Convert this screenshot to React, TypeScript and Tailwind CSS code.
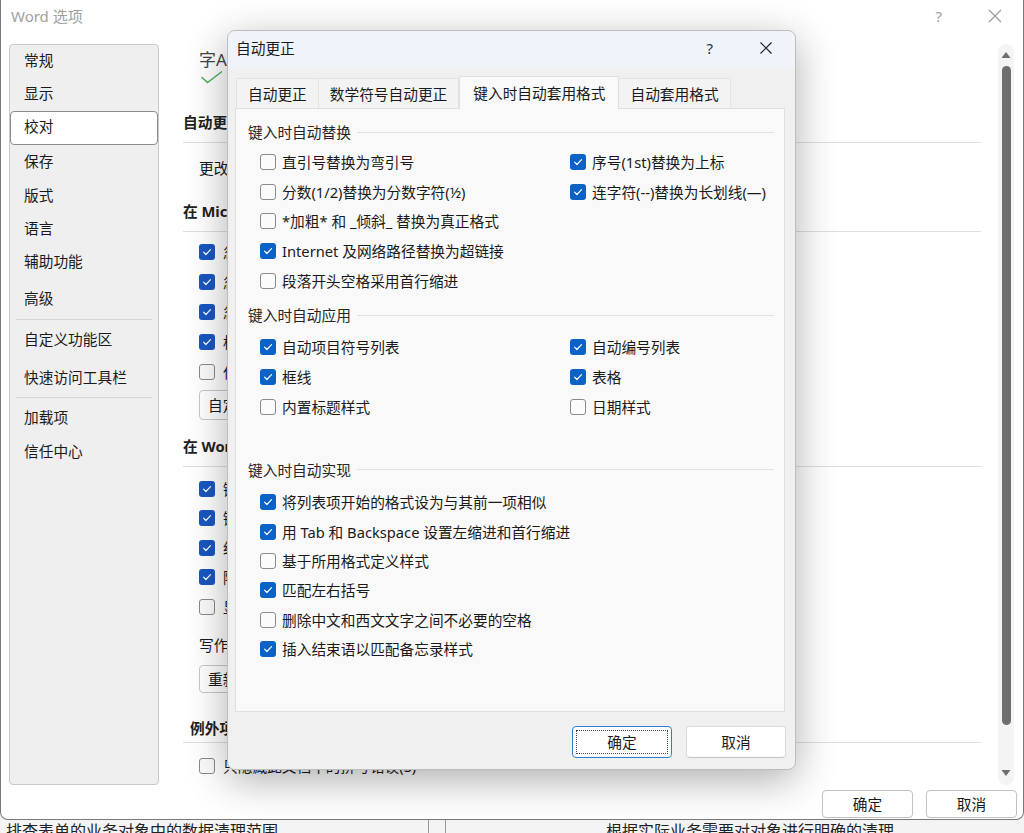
import React from 'react'

const FONT = "font-['Noto_Sans','Noto_Sans_CJK_SC',sans-serif]"

function Check({ checked, tone = 'dialog' }: { checked: boolean; tone?: 'dialog' | 'page' }) {
  if (checked) {
    return (
      <span
        className={`flex h-[16px] w-[16px] shrink-0 items-center justify-center rounded-[3px] ${
          tone === 'dialog' ? 'bg-[#0a62c6]' : 'bg-[#1a57c1]'
        }`}
      >
        <svg width="16" height="16" viewBox="0 0 16 16" fill="none">
          <path d="M4.6 8.2l2.3 2.3 4.6-4.8" stroke="white" strokeWidth="1.2" strokeLinecap="round" strokeLinejoin="round" />
        </svg>
      </span>
    )
  }
  return <span className="h-[16px] w-[16px] shrink-0 rounded-[3px] border border-[#8a8a8a] bg-[#fbfbfb]" />
}

function Option({ label, checked, h = 'h-[29.7px]' }: { label: string; checked: boolean; h?: string }) {
  return (
    <div className={`flex items-center gap-[6px] ${h}`}>
      <Check checked={checked} />
      <span className="whitespace-nowrap">{label}</span>
    </div>
  )
}

function GroupLabel({ text }: { text: string }) {
  return (
    <div className="flex h-[20px] items-center pl-[12px] pr-[10px]">
      <span className="whitespace-nowrap text-[#262626]">{text}</span>
      <span className="ml-[6px] h-px flex-1 bg-[#e2e2e2]" />
    </div>
  )
}

type Pair = [string, boolean]

function TwoCol({ rows, top }: { rows: [Pair, Pair | null][]; top: string }) {
  return (
    <div className={`grid grid-cols-[310px_1fr] pl-[24px] ${top}`}>
      {rows.map(([l, r], i) => (
        <React.Fragment key={i}>
          <Option label={l[0]} checked={l[1]} />
          {r ? <Option label={r[0]} checked={r[1]} /> : <div />}
        </React.Fragment>
      ))}
    </div>
  )
}

const replaceRows: [Pair, Pair | null][] = [
  [['直引号替换为弯引号', false], ['序号(1st)替换为上标', true]],
  [['分数(1/2)替换为分数字符(½)', false], ['连字符(--)替换为长划线(—)', true]],
  [['*加粗* 和 _倾斜_ 替换为真正格式', false], null],
  [['Internet 及网络路径替换为超链接', true], null],
  [['段落开头空格采用首行缩进', false], null],
]

const applyRows: [Pair, Pair | null][] = [
  [['自动项目符号列表', true], ['自动编号列表', true]],
  [['框线', true], ['表格', true]],
  [['内置标题样式', false], ['日期样式', false]],
]

const doRows: Pair[] = [
  ['将列表项开始的格式设为与其前一项相似', true],
  ['用 Tab 和 Backspace 设置左缩进和首行缩进', true],
  ['基于所用格式定义样式', false],
  ['匹配左右括号', true],
  ['删除中文和西文文字之间不必要的空格', false],
  ['插入结束语以匹配备忘录样式', true],
]

const tabs = ['自动更正', '数学符号自动更正', '键入时自动套用格式', '自动套用格式']

function AutoCorrectDialog() {
  return (
    <div className="absolute left-[227px] top-[30px] flex w-[569px] flex-col rounded-[8px] border border-[#bdbdbd] bg-[#f0f0f0] text-[14.7px] leading-[20px] text-[#1a1a1a] shadow-[0_10px_40px_rgba(0,0,0,0.32)]">
      <div className="flex h-[36px] items-center rounded-t-[8px] bg-[#eef4f9] pb-[3px] pl-[8px]">
        <span>自动更正</span>
        <span className="ml-auto mr-[45px] text-[15px] text-[#333]">?</span>
        <svg className="mr-[21px]" width="16" height="16" viewBox="0 0 16 16">
          <path d="M2.5 2.5l11 11M13.5 2.5l-11 11" stroke="#222" strokeWidth="1.2" />
        </svg>
      </div>

      <div className="flex items-end pl-[8px] pt-[9px]">
        {tabs.map((t, i) =>
          i === 2 ? (
            <div
              key={t}
              className="relative z-10 -mb-px flex h-[33px] items-center border border-b-0 border-[#e0e0e0] bg-[#f9f9f9] pl-[13px] pr-[13px]"
            >
              {t}
            </div>
          ) : (
            <div
              key={t}
              className={`flex h-[30px] items-center border-t border-r border-[#e3e3e3] bg-[#f3f3f3] px-[11px] ${
                i === 0 ? 'border-l' : ''
              }`}
            >
              {t}
            </div>
          ),
        )}
      </div>

      <div className="ml-[7px] mr-[10px] h-[604px] border border-[#e0e0e0] bg-[#f9f9f9] pt-[13px]">
        <GroupLabel text="键入时自动替换" />
        <TwoCol rows={replaceRows} top="mt-[5px]" />

        <div className="mt-[10px]">
          <GroupLabel text="键入时自动应用" />
        </div>
        <TwoCol rows={applyRows} top="mt-[7px]" />

        <div className="mt-[38px]">
          <GroupLabel text="键入时自动实现" />
        </div>
        <div className="mt-[8px] pl-[24px]">
          {doRows.map(([l, c]) => (
            <Option key={l} label={l} checked={c} h="h-[29.4px]" />
          ))}
        </div>
      </div>

      <div className="flex justify-end gap-[14px] pb-[11px] pr-[9px] pt-[14px]">
        <div className="flex h-[32px] w-[100px] items-center justify-center rounded-[4px] border border-[#2f7fd0] bg-white p-[3px]">
          <div className="flex h-full w-full items-center justify-center border border-dotted border-[#444]">确定</div>
        </div>
        <div className="flex h-[32px] w-[100px] items-center justify-center rounded-[4px] border border-[#dcdcdc] border-b-[#c4c4c4] bg-white">
          取消
        </div>
      </div>
    </div>
  )
}

const navGroups: { label: string; h: number; active?: boolean }[][] = [
  [
    { label: '常规', h: 32.5 },
    { label: '显示', h: 33.5 },
    { label: '校对', h: 33.5, active: true },
    { label: '保存', h: 34.5 },
    { label: '版式', h: 33 },
    { label: '语言', h: 33.5 },
    { label: '辅助功能', h: 33.5 },
    { label: '高级', h: 40 },
  ],
  [
    { label: '自定义功能区', h: 39 },
    { label: '快速访问工具栏', h: 38 },
  ],
  [
    { label: '加载项', h: 39 },
    { label: '信任中心', h: 30 },
  ],
]

function Sidebar() {
  return (
    <div className="ml-[8px] h-[741px] w-[150px] shrink-0 rounded-[4px] border border-[#c9c9c9] bg-[#efefef]">
      {navGroups.map((g, gi) => (
        <div key={gi}>
          {gi > 0 && <div className="mx-[6px] h-px bg-[#d6d6d6]" />}
          {g.map((it) =>
            it.active ? (
              <div
                key={it.label}
                style={{ height: it.h }}
                className="flex items-center rounded-[4px] border border-[#8c8c8c] bg-white pb-[3px] pl-[13px]"
              >
                {it.label}
              </div>
            ) : (
              <div key={it.label} style={{ height: it.h }} className="flex items-center pb-[2px] pl-[14px]">
                {it.label}
              </div>
            ),
          )}
        </div>
      ))}
    </div>
  )
}

function PageOption({ label, checked, h = 30 }: { label: string; checked: boolean; h?: number }) {
  return (
    <div style={{ height: h }} className="flex items-center gap-[8px] pl-[16px]">
      <Check checked={checked} tone="page" />
      <span className="whitespace-nowrap">{label}</span>
    </div>
  )
}

function Header({ text, className = '' }: { text: string; className?: string }) {
  return <div className={`flex items-center font-bold text-[#222] ${className}`}>{text}</div>
}

function MainContent() {
  return (
    <div className="ml-[24px] w-[798px] shrink-0">
      <div className="flex h-[62px] items-start pl-[16px] pt-[4px]">
        <div className="flex flex-col items-start">
          <span className="text-[17px] leading-[24px] text-[#444]">字A</span>
          <svg width="24" height="14" viewBox="0 0 24 14" className="-mt-[2px] ml-[1px]">
            <path d="M1.5 7l6 5.5L22 1.5" stroke="#4caf5f" strokeWidth="1.4" fill="none" />
          </svg>
        </div>
        <span className="ml-[12px] mt-[8px]">更改 Word 更正文字和设置其格式的方式。</span>
      </div>

      <Header text="自动更正选项" className="h-[32px]" />
      <div className="mt-[4px] h-px bg-[#dedede]" />
      <div className="flex h-[50px] items-center pl-[16px]">更改键入时 Word 更正文字和设置其格式的方式:</div>

      <Header text="在 Microsoft Office 程序中更正拼写时" className="h-[36px]" />
      <div className="mt-[2px] h-px bg-[#dedede]" />
      <div className="pt-[5px]">
        <PageOption label="忽略全部大写的单词(U)" checked />
        <PageOption label="忽略包含数字的单词(B)" checked />
        <PageOption label="忽略 Internet 和文件地址(F)" checked />
        <PageOption label="标记重复单词(R)" checked />
        <PageOption label="仅根据主词典提供建议(I)" checked={false} />
      </div>
      <div className="ml-[16px] mt-[3px] flex h-[30px] w-[130px] items-center rounded-[4px] border border-[#c8c8c8] bg-white pl-[8px]">
        自定义词典(C)...
      </div>

      <Header text="在 Word 中更正拼写和语法时" className="mt-[12px] h-[28px]" />
      <div className="mt-[6px] h-px bg-[#dedede]" />
      <div className="pt-[7px]">
        <PageOption label="键入时检查拼写(P)" checked h={29.5} />
        <PageOption label="键入时标记语法错误(M)" checked h={29.5} />
        <PageOption label="经常混淆的单词(N)" checked h={29.5} />
        <PageOption label="随拼写检查语法(H)" checked h={29.5} />
        <PageOption label="显示可读性统计信息(L)" checked={false} h={29.5} />
      </div>
      <div className="mt-[11px] flex h-[24px] items-center pl-[16px]">写作风格(W):</div>
      <div className="ml-[16px] mt-[8px] flex h-[28px] w-[130px] items-center rounded-[4px] border border-[#c8c8c8] bg-white pl-[8px]">
        重新检查文档(K)
      </div>

      <Header text="例外项(X):" className="mt-[22px] h-[27px] pl-[7px]" />
      <div className="h-px bg-[#dedede]" />
      <div className="mt-[8px]">
        <PageOption label="只隐藏此文档中的拼写错误(S)" checked={false} />
      </div>
    </div>
  )
}

function Scrollbar() {
  return (
    <div className="ml-[17px] flex h-[741px] w-[16px] shrink-0 flex-col items-center rounded-full bg-[#f4f4f4]">
      <svg width="10" height="8" viewBox="0 0 10 8" className="mt-[7px]">
        <path d="M5 1L9.5 7H0.5z" fill="#6e6e6e" />
      </svg>
      <div className="mt-[7px] h-[659px] w-[9px] rounded-full bg-[#6e6e6e]" />
      <svg width="10" height="8" viewBox="0 0 10 8" className="mt-[44px]">
        <path d="M5 7L9.5 1H0.5z" fill="#6e6e6e" />
      </svg>
    </div>
  )
}

export default function App() {
  return (
    <div className={`relative h-[833px] w-[1024px] overflow-hidden bg-[#f2f2f2] ${FONT}`}>
      <div className="flex h-[820px] flex-col rounded-b-[8px] border-b border-l border-r border-[#7a7a7a] bg-white text-[14.7px] leading-[20px] text-[#1a1a1a]">
        <div className="flex h-[44px] items-start pt-[5px]">
          <span className="ml-[10px] text-[15px] leading-[22px] text-[#a0a0a0]">Word 选项</span>
          <span className="ml-auto mr-[45px] text-[15px] leading-[22px] text-[#a0a0a0]">?</span>
          <svg className="mr-[20px] mt-[3px]" width="16" height="16" viewBox="0 0 16 16">
            <path d="M2 2l12 12M14 2L2 14" stroke="#9a9a9a" strokeWidth="1.2" />
          </svg>
        </div>

        <div className="flex">
          <Sidebar />
          <MainContent />
          <Scrollbar />
        </div>

        <div className="mt-[5px] flex justify-end gap-[13px] pr-[6px]">
          <div className="flex h-[28px] w-[91px] items-center justify-center rounded-[4px] border border-[#c2c2c2] bg-white">
            确定
          </div>
          <div className="flex h-[28px] w-[91px] items-center justify-center rounded-[4px] border border-[#c2c2c2] bg-white">
            取消
          </div>
        </div>
      </div>

      <div className="flex h-[13px] overflow-hidden bg-[#f4f4f4] text-[16px] leading-[22px] text-[#222]">
        <span className="ml-[6px] whitespace-nowrap">排查表单的业务对象中的数据清理范围</span>
        <span className="ml-[150px] h-[13px] w-px bg-[#999]" />
        <span className="ml-[16px] h-[13px] w-px bg-[#999]" />
        <span className="ml-[160px] whitespace-nowrap">根据实际业务需要对对象进行明确的清理</span>
      </div>

      <AutoCorrectDialog />
    </div>
  )
}
